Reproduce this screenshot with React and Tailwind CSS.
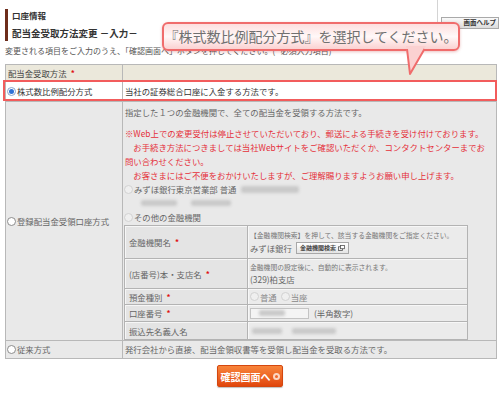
import clsx from 'clsx'

function Radio({ checked = false, disabled = false }) {
  if (checked) {
    return (
      <span className="inline-block h-[9px] w-[9px] shrink-0 rounded-full border border-[#8aa6cc] bg-white p-[1px]">
        <span className="block h-full w-full rounded-full bg-[#2f72d6]" />
      </span>
    )
  }
  return (
    <span
      className={clsx(
        'inline-block h-[9px] w-[9px] shrink-0 rounded-full border',
        disabled ? 'border-[#d2d2d2] bg-[#efefef]' : 'border-[#8c8c8c] bg-white'
      )}
    />
  )
}

function Req() {
  return <span className="ml-[4px] text-[8px] font-bold text-[#e01010]">*</span>
}

function Blur({ className }) {
  return <span className={clsx('inline-block rounded-[2px] bg-[#c9c9c9] blur-[1.5px]', className)} />
}

function InnerRow({ label, required, height, first, children }) {
  return (
    <div className={clsx('grid grid-cols-[123px_1fr]', !first && 'border-t border-[#b3b3b3]', height)}>
      <div className="flex items-center border-r border-[#b3b3b3] bg-[#e4e4e4] pl-[4px] shadow-[inset_1px_1px_0_#f6f6f6]">
        {label}
        {required && <Req />}
      </div>
      <div className="flex flex-col justify-center bg-[#ebebeb] pl-[2px] shadow-[inset_1px_1px_0_#f7f7f7]">
        {children}
      </div>
    </div>
  )
}

export default function App() {
  return (
    <div className="relative h-[401px] w-[500px] overflow-hidden bg-white font-['Noto_Sans_CJK_JP','Noto_Sans',sans-serif] text-[8.4px] text-[#555]">
      {/* header */}
      <div className="flex items-start">
        <div className="ml-[5px] mt-[9px] flex h-[32px] flex-col border-l-[3px] border-[#6d2d1b] pl-[4px] text-[#333]">
          <div className="text-[8.5px] font-bold leading-[12px]">口座情報</div>
          <div className="mt-[6px] text-[9.5px] font-bold leading-[12px]">配当金受取方法変更 －入力－</div>
        </div>
        <div className="ml-auto mr-[1px] flex items-start gap-[3px]">
          <div className="h-[28px] w-px bg-[#d4d4d4]" />
          <div className="mt-[17px] flex h-[12px] w-[58px] items-center justify-end border border-[#a9a9a9] bg-gradient-to-b from-[#fafafa] to-[#dcdcdc] pr-[2px] text-[6.5px] font-bold text-[#333]">
            画面ヘルプ
          </div>
        </div>
      </div>

      <div className="ml-[5px] mt-[4px] whitespace-nowrap text-[8px] leading-[12px] text-[#555]">
        変更される項目をご入力のうえ、「確認画面へ」ボタンを押してください。(<span className="text-[#e01010]">*</span> 必須入力項目)
      </div>

      {/* table */}
      <div className="ml-[5px] mt-[7px] w-[492px] border border-[#b8b8b8]">
        <div className="grid h-[16px] grid-cols-[117px_1fr] bg-[#ebe8db]">
          <div className="flex items-center border-r border-[#b8b8b8] pl-[2px] text-[#444]">
            配当金受取方法<Req />
          </div>
          <div />
        </div>

        <div className="grid h-[20px] grid-cols-[117px_1fr] border-t border-[#b8b8b8] bg-white text-[#333]">
          <div className="flex items-center gap-[1px] border-r border-[#b8b8b8] pl-[1px]">
            <Radio checked />
            株式数比例配分方式
          </div>
          <div className="flex items-center pl-[2px]">当社の証券総合口座に入金する方法です。</div>
        </div>

        <div className="grid h-[239px] grid-cols-[117px_1fr] border-t border-[#b8b8b8] bg-[#e9e9e9] text-[#666]">
          <div className="flex items-center gap-[1px] border-r border-[#b8b8b8] pl-[1px]">
            <Radio />
            登録配当金受領口座方式
          </div>
          <div className="pt-[3px] leading-[14px]">
            <div className="pl-[2px]">指定した１つの金融機関で、全ての配当金を受領する方法です。</div>
            <div className="mt-[7px] whitespace-nowrap pl-[2px] text-[#e5303a]">
              <div>※Web上での変更受付は停止させていただいており、郵送による手続きを受け付けております。</div>
              <div>　お手続き方法につきましては当社Webサイトをご確認いただくか、コンタクトセンターまでお</div>
              <div>問い合わせください。</div>
              <div>　お客さまにはご不便をおかけいたしますが、ご理解賜りますようお願い申し上げます。</div>
            </div>
            <div className="flex h-[14px] items-center gap-[1px] pl-[1px]">
              <Radio disabled />
              みずほ銀行東京営業部 普通
              <Blur className="ml-[4px] h-[7px] w-[58px]" />
            </div>
            <div className="flex h-[14px] items-center pl-[18px]">
              <Blur className="h-[6px] w-[36px]" />
              <Blur className="ml-[14px] h-[6px] w-[40px]" />
            </div>
            <div className="flex h-[14px] items-center gap-[1px] pl-[1px]">
              <Radio disabled />
              その他の金融機関
            </div>

            <div className="ml-[1px] mt-[1px] w-[344px] border border-[#b3b3b3] leading-[12px]">
              <InnerRow label="金融機関名" required first height="h-[32px]">
                <div className="text-[6.8px] leading-[11px] text-[#777]">【金融機関検索】を押して、該当する金融機関をご指定ください。</div>
                <div className="flex items-center gap-[4px] leading-[14px]">
                  みずほ銀行
                  <span className="flex h-[12px] items-center gap-[2px] border border-[#a8a8a8] bg-gradient-to-b from-white to-[#e4e4e4] px-[3px] text-[6px] font-bold text-[#444]">
                    金融機関検索
                    <svg width="7" height="6" viewBox="0 0 7 6" fill="none" stroke="#555" strokeWidth="0.8">
                      <rect x="0.5" y="1.8" width="4" height="3.7" />
                      <rect x="2.5" y="0.5" width="4" height="3.2" fill="#fff" />
                    </svg>
                  </span>
                </div>
              </InnerRow>
              <InnerRow label="(店番号)本・支店名" required height="h-[30px]">
                <div className="text-[6.8px] leading-[11px] text-[#777]">金融機関の設定後に、自動的に表示されます。</div>
                <div className="leading-[13px]">(329)柏支店</div>
              </InnerRow>
              <InnerRow label="預金種別" required height="h-[16px]">
                <div className="flex items-center gap-[1px]">
                  <Radio disabled />
                  <span className="text-[#888]">普通</span>
                  <span className="ml-[2px]" />
                  <Radio disabled />
                  <span className="text-[#888]">当座</span>
                </div>
              </InnerRow>
              <InnerRow label="口座番号" required height="h-[17px]">
                <div className="flex items-center">
                  <span className="flex h-[11px] w-[59px] items-center border border-[#c4c4c4] bg-[#f4f4f4] pl-[8px]">
                    <Blur className="h-[6px] w-[26px]" />
                  </span>
                  <span className="ml-[5px]">(半角数字)</span>
                </div>
              </InnerRow>
              <InnerRow label="振込先名義人名" height="h-[18px]">
                <div className="flex items-center pl-[2px]">
                  <Blur className="h-[6px] w-[30px]" />
                  <Blur className="ml-[10px] h-[6px] w-[44px]" />
                </div>
              </InnerRow>
            </div>
          </div>
        </div>

        <div className="grid h-[18px] grid-cols-[117px_1fr] border-t border-[#b8b8b8] bg-[#e9e9e9] text-[#666]">
          <div className="flex items-center gap-[1px] border-r border-[#b8b8b8] pl-[1px]">
            <Radio />
            従来方式
          </div>
          <div className="flex items-center pl-[2px]">発行会社から直接、配当金領収書等を受領し配当金を受取る方法です。</div>
        </div>
      </div>

      <div className="mt-[6px] flex justify-center">
        <button className="flex h-[22px] w-[66px] items-center justify-center gap-[2px] rounded-[2px] border border-[#d4470f] bg-gradient-to-b from-[#f8843a] to-[#e1460b] text-[10px] font-bold text-white shadow-[0_1px_1px_rgba(0,0,0,0.25)]">
          確認画面へ
          <span className="h-[7px] w-[7px] rounded-full border-[2px] border-[#fcd6c2] bg-[#f0672a]" />
        </button>
      </div>

      {/* highlight on selected row */}
      <div className="absolute left-[3px] top-[80px] h-[21px] w-[494px] border-2 border-[#f25c5c]" />

      {/* tooltip */}
      <div className="absolute left-[162px] top-[22px] flex h-[29px] w-[298px] items-center justify-center rounded-[6px] border-2 border-[#f06c6c] bg-gradient-to-b from-[#fddede] via-[#fff8f8] to-[#fbd1d1] text-[14px] text-[#707070] shadow-[0_1px_3px_rgba(200,80,80,0.35)]">
        『株式数比例配分方式』を選択してください。
      </div>
      <svg className="absolute left-[404px] top-[46px]" width="24" height="30" viewBox="0 0 24 30">
        <path d="M2 0 L22 0 L6 28 Z" fill="#fbd1d1" />
        <path d="M3 3 L6 28 L20.5 3" fill="none" stroke="#f06c6c" strokeWidth="2" strokeLinejoin="round" />
      </svg>
    </div>
  )
}
